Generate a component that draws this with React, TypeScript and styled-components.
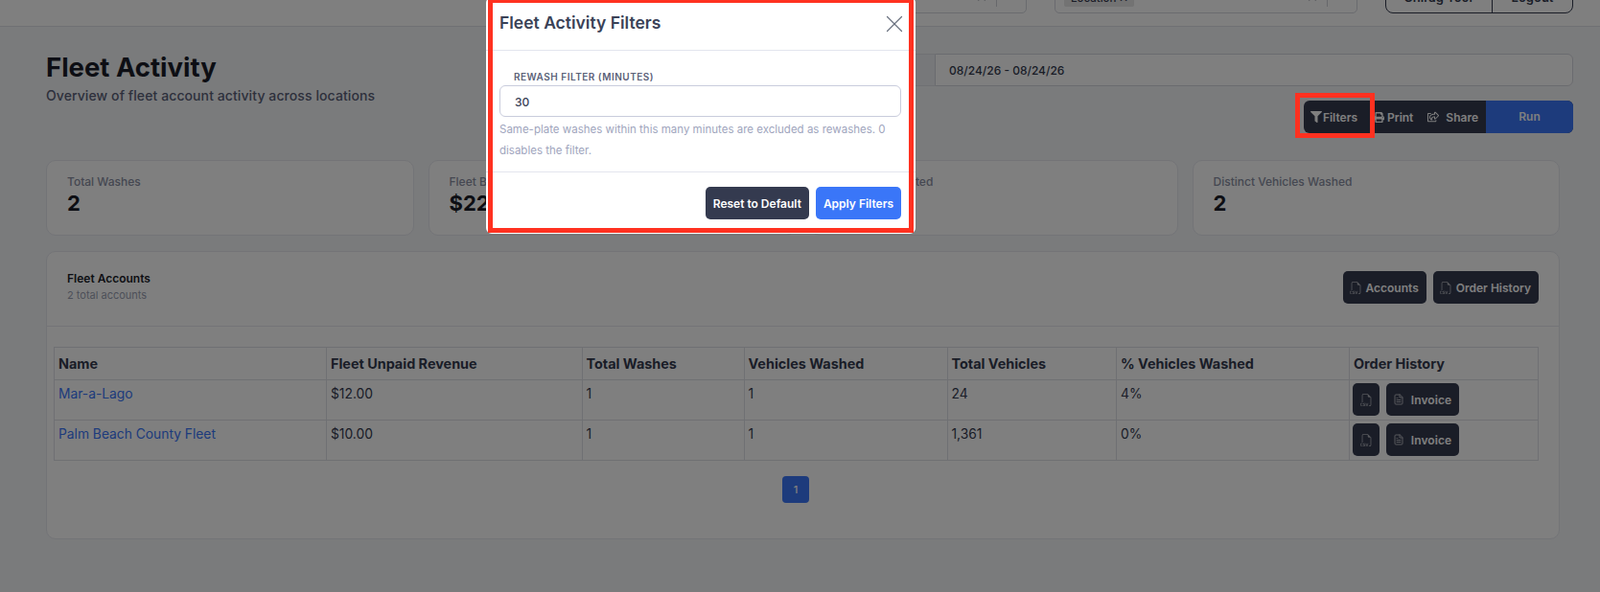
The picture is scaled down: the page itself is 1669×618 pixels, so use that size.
import React from "react"
import styled, { createGlobalStyle } from "styled-components"
import { FaFilter, FaPrint, FaRegShareSquare } from "react-icons/fa"
import { BsFiletypeCsv } from "react-icons/bs"
import { FiFileText } from "react-icons/fi"
import { X, ChevronDown } from "lucide-react"

const GlobalStyle = createGlobalStyle`
    html, body {
        margin: 0;
        padding: 0;
        height: 100%;
        overflow: hidden;
        background: #f5f6f9;
    }
    * { box-sizing: border-box; }
    body, input, button, table {
        font-family: Inter, "Noto Sans", sans-serif;
    }
`

const Page = styled.div`
    position: relative;
    width: 1669px;
    height: 618px;
    overflow: hidden;
    background: #f5f6f9;
    color: #343a4f;
`

const TopBar = styled.header`
    height: 28px;
    background: #fff;
    border-bottom: 1px solid #dfe1e6;
    padding: 0 28px 13px 0;
    display: flex;
    justify-content: flex-end;
    align-items: flex-end;
    overflow: hidden;
`

const SelectBox = styled.div`
    flex: none;
    width: 316px;
    height: 38px;
    margin-right: 29px;
    padding: 0 8px 6px 9px;
    border: 1px solid #d5d7de;
    border-radius: 5px;
    display: flex;
    align-items: flex-end;
    justify-content: space-between;
`

const Tag = styled.span`
    height: 22px;
    width: 73px;
    padding: 0 7px;
    background: #e6e6e6;
    border-radius: 2px;
    font-size: 11.5px;
    font-weight: 500;
    line-height: 26px;
    color: #343a4f;
    white-space: nowrap;
`

const SelectControls = styled.span`
    display: flex;
    align-items: center;
    gap: 8px;
    color: #c4c6cc;
    font-size: 12px;
`

const ControlDivider = styled.span`
    width: 1px;
    height: 20px;
    background: #cfd1d6;
`

const UserButtons = styled.div`
    display: flex;
    flex: none;
    height: 34px;
    border: 1px solid #343a4f;
    border-radius: 0 0 8px 8px;
`

const UserButton = styled.div<{ $width: number; $divided?: boolean }>`
    width: ${props => props.$width}px;
    text-align: center;
    font-size: 13px;
    font-weight: 600;
    line-height: 32px;
    color: #343a4f;
    border-left: ${props => props.$divided ? "1px solid #343a4f" : "none"};
`

const Content = styled.main`
    padding: 0 42px 0 48px;
`

const TopRow = styled.section`
    display: grid;
    grid-template-columns: 796px 1fr;
    margin-right: -14px;
    height: 139px;
`

const Heading = styled.div`
    padding-top: 25px;
`

const Title = styled.h1`
    margin: 0;
    font-size: 27.5px;
    line-height: 34px;
    font-weight: 700;
    color: #1a1d29;
`

const Subtitle = styled.p`
    margin: 3px 0 0;
    font-size: 14px;
    line-height: 20px;
    font-weight: 500;
    letter-spacing: 0.09px;
    color: #5b6178;
`

const Controls = styled.div`
    padding-top: 28px;
    display: flex;
    flex-direction: column;
    align-items: flex-end;
`

const DateGroup = styled.div`
    width: 100%;
    height: 34px;
    display: flex;
`

const DatePrefix = styled.div`
    width: 131px;
    background: #eef0f4;
    border: 1px solid #dfe1e6;
    border-right: none;
    border-radius: 6px 0 0 6px;
`

const DateField = styled.div`
    flex: 1;
    background: #fff;
    border: 1px solid #d5d7de;
    border-radius: 0 6px 6px 0;
    padding: 2px 0 0 14px;
    font-size: 12px;
    font-weight: 500;
    line-height: 30px;
    color: #343a4f;
`

const ActionRow = styled.div`
    display: flex;
    margin-top: 15px;
    height: 34px;
    border-radius: 6px;
    background: #343a4f;
`

const ActionButton = styled.div<{ $left: number; $right: number; $gap: number }>`
    position: relative;
    display: flex;
    align-items: center;
    gap: ${props => props.$gap}px;
    padding: 0 ${props => props.$right}px 0 ${props => props.$left}px;
    font-size: 12px;
    font-weight: 600;
    color: #fff;
    svg { flex: none; }
`

const RunButton = styled.div`
    width: 91px;
    background: #3a76f8;
    border-radius: 0 6px 6px 0;
    text-align: center;
    font-size: 12px;
    font-weight: 600;
    line-height: 34px;
    color: #fff;
`

const Highlight = styled.div`
    position: absolute;
    left: -9px;
    top: -8px;
    width: 83px;
    height: 47px;
    border: 5px solid #ff3120;
    z-index: 30;
`

const Stats = styled.section`
    display: grid;
    grid-template-columns: repeat(4, 1fr);
    gap: 15px;
`

const StatCard = styled.div`
    height: 79px;
    background: #fff;
    border: 1px solid #e6e8ee;
    border-radius: 10px;
    padding: 14px 21px;
`

const StatLabel = styled.div`
    font-size: 12px;
    line-height: 16px;
    font-weight: 500;
    color: #8a8fa3;
`

const StatValue = styled.div`
    font-size: 22px;
    line-height: 28px;
    font-weight: 700;
    color: #1a1d29;
`

const AccountsCard = styled.section`
    margin-top: 16px;
    height: 301px;
    background: #fff;
    border: 1px solid #e6e8ee;
    border-radius: 10px;
`

const CardHeader = styled.div`
    height: 78px;
    border-bottom: 1px solid #e6e8ee;
    padding: 20px 21px 0 21px;
    display: flex;
    justify-content: space-between;
`

const CardTitle = styled.div`
    font-size: 12px;
    line-height: 16px;
    font-weight: 600;
    color: #1a1d29;
`

const CardSub = styled.div`
    margin-top: 2px;
    font-size: 11px;
    line-height: 15px;
    color: #9a9fb2;
`

const ButtonRow = styled.div`
    display: flex;
    gap: 7px;
    height: 34px;
`

const DarkButton = styled.div<{ $square?: boolean }>`
    height: 34px;
    padding: 0 ${props => props.$square ? "0" : "8px 0 7px"};
    width: ${props => props.$square ? "28px" : "auto"};
    display: flex;
    align-items: center;
    justify-content: center;
    gap: 4px;
    background: #343a4f;
    border-radius: 5px;
    color: #fff;
    font-size: 12px;
    font-weight: 600;
    white-space: nowrap;
    svg { flex: none; opacity: 0.6; }
`

const InvoiceButton = styled(DarkButton)`
    width: 76px;
    padding: 0 8px 0 7px;
    gap: 7px;
    letter-spacing: 0.1px;
`

const TableWrap = styled.div`
    padding: 21px 22px 0 7px;
`

const Table = styled.table`
    width: 1547px;
    table-layout: fixed;
    border-collapse: collapse;
    font-size: 13.8px;
    line-height: 21px;
    color: #343a4f;
`

const HeaderCell = styled.th`
    height: 34px;
    padding: 0 4px 1px;
    border: 1px solid #dfe1e6;
    text-align: left;
    font-size: 14.4px;
    font-weight: 700;
    color: #343a4f;
`

const Cell = styled.td`
    height: 42px;
    padding: 4px 4px 3px;
    border: 1px solid #dfe1e6;
    vertical-align: top;
`

const ActionCell = styled(Cell)`
    padding: 3px 3px 4px;
`

const AccountLink = styled.a`
    color: #3a76f8;
    text-decoration: none;
`

const Pager = styled.div`
    display: flex;
    justify-content: center;
    margin-top: 16px;
`

const PageNumber = styled.div`
    width: 28px;
    height: 28px;
    background: #3a76f8;
    border-radius: 4px;
    color: #fff;
    text-align: center;
    font-size: 11px;
    font-weight: 500;
    line-height: 28px;
`

const Overlay = styled.div`
    position: absolute;
    inset: 0;
    background: rgba(0, 0, 0, 0.5);
    z-index: 10;
`

const Modal = styled.div`
    position: absolute;
    left: 507px;
    top: -3px;
    width: 448px;
    background: #fff;
    border-radius: 6px;
    z-index: 20;
`

const ModalFrame = styled.div`
    position: absolute;
    left: 2px;
    right: 2px;
    top: 1px;
    bottom: 1px;
    border: 5px solid #ff3120;
    z-index: 30;
    pointer-events: none;
`

const ModalHeader = styled.div`
    height: 56px;
    border-bottom: 1px solid #e3e5ee;
    padding: 0 7px 0 14px;
    display: flex;
    align-items: center;
    justify-content: space-between;
    color: #6b7280;
`

const ModalTitle = styled.h2`
    margin: 0 0 2px;
    font-size: 17.5px;
    font-weight: 600;
    color: #3a4257;
`

const ModalBody = styled.div`
    height: 127px;
    border-bottom: 1px solid #e3e5ee;
    padding: 20px 15px 0 14px;
`

const FieldLabel = styled.label`
    display: block;
    padding-left: 15px;
    font-size: 10px;
    line-height: 15px;
    font-weight: 600;
    letter-spacing: 0.5px;
    text-transform: uppercase;
    color: #5b6178;
`

const NumberInput = styled.input`
    display: block;
    width: 100%;
    height: 33px;
    margin-top: 1px;
    padding: 2px 15px 0;
    border: 1px solid #c9ccdc;
    border-radius: 6px;
    outline: none;
    font-size: 12px;
    font-weight: 500;
    color: #3a4257;
`

const HelpText = styled.p`
    margin: 0;
    padding-top: 2px;
    font-size: 11.5px;
    line-height: 22px;
    color: #a0a5bd;
`

const ModalFooter = styled.div`
    height: 64px;
    padding: 15px 15px 0;
    display: flex;
    justify-content: flex-end;
    gap: 7px;
`

const FooterButton = styled.button<{ $primary?: boolean }>`
    height: 34px;
    padding: 0 8px;
    border: none;
    border-radius: 5px;
    background: ${props => props.$primary ? "#3a76f8" : "#343a4f"};
    color: #fff;
    font-size: 12px;
    font-weight: 600;
`

const columns = [284, 266.5, 169, 212, 176.5, 243, 196.5]

const headers = [
    "Name",
    "Fleet Unpaid Revenue",
    "Total Washes",
    "Vehicles Washed",
    "Total Vehicles",
    "% Vehicles Washed",
    "Order History",
]

const accounts = [
    { name: "Mar-a-Lago", revenue: "$12.00", washes: "1", washed: "1", total: "24", percent: "4%" },
    { name: "Palm Beach County Fleet", revenue: "$10.00", washes: "1", washed: "1", total: "1,361", percent: "0%" },
]

const stats = [
    { label: "Total Washes", value: "2" },
    { label: "Fleet Balance", value: "$22.00" },
    { label: "Vehicles Activated", value: "2" },
    { label: "Distinct Vehicles Washed", value: "2" },
]

function Select({ tag }: { tag?: boolean }) {
    return (
        <SelectBox>
            {tag ? <Tag>Location ✕</Tag> : <span />}
            <SelectControls>
                <X size={14} />
                <ControlDivider />
                <ChevronDown size={14} />
            </SelectControls>
        </SelectBox>
    )
}

export default function App() {
    return (
        <Page>
            <GlobalStyle />
            <TopBar>
                <Select />
                <Select tag />
                <UserButtons>
                    <UserButton $width={110}>Chirag Toor</UserButton>
                    <UserButton $width={84} $divided>Logout</UserButton>
                </UserButtons>
            </TopBar>

            <Content>
                <TopRow>
                    <Heading>
                        <Title>Fleet Activity</Title>
                        <Subtitle>Overview of fleet account activity across locations</Subtitle>
                    </Heading>
                    <Controls>
                        <DateGroup>
                            <DatePrefix />
                            <DateField>08/24/26 - 08/24/26</DateField>
                        </DateGroup>
                        <ActionRow>
                            <ActionButton $left={7} $right={8} $gap={1}>
                                <FaFilter size={12} />
                                Filters
                                <Highlight />
                            </ActionButton>
                            <ActionButton $left={9} $right={8} $gap={3}>
                                <FaPrint size={11} />
                                Print
                            </ActionButton>
                            <ActionButton $left={7} $right={8} $gap={7}>
                                <FaRegShareSquare size={12} />
                                Share
                            </ActionButton>
                            <RunButton>Run</RunButton>
                        </ActionRow>
                    </Controls>
                </TopRow>

                <Stats>
                    {stats.map(stat => (
                        <StatCard key={stat.label}>
                            <StatLabel>{stat.label}</StatLabel>
                            <StatValue>{stat.value}</StatValue>
                        </StatCard>
                    ))}
                </Stats>

                <AccountsCard>
                    <CardHeader>
                        <div>
                            <CardTitle>Fleet Accounts</CardTitle>
                            <CardSub>2 total accounts</CardSub>
                        </div>
                        <ButtonRow>
                            <DarkButton><BsFiletypeCsv size={13} />Accounts</DarkButton>
                            <DarkButton><BsFiletypeCsv size={13} />Order History</DarkButton>
                        </ButtonRow>
                    </CardHeader>
                    <TableWrap>
                        <Table>
                            <colgroup>
                                {columns.map((width, i) => <col key={i} width={width} />)}
                            </colgroup>
                            <thead>
                                <tr>
                                    {headers.map(header => <HeaderCell key={header}>{header}</HeaderCell>)}
                                </tr>
                            </thead>
                            <tbody>
                                {accounts.map(account => (
                                    <tr key={account.name}>
                                        <Cell><AccountLink href="#">{account.name}</AccountLink></Cell>
                                        <Cell>{account.revenue}</Cell>
                                        <Cell>{account.washes}</Cell>
                                        <Cell>{account.washed}</Cell>
                                        <Cell>{account.total}</Cell>
                                        <Cell>{account.percent}</Cell>
                                        <ActionCell>
                                            <ButtonRow>
                                                <DarkButton $square><BsFiletypeCsv size={13} /></DarkButton>
                                                <InvoiceButton><FiFileText size={12} />Invoice</InvoiceButton>
                                            </ButtonRow>
                                        </ActionCell>
                                    </tr>
                                ))}
                            </tbody>
                        </Table>
                        <Pager>
                            <PageNumber>1</PageNumber>
                        </Pager>
                    </TableWrap>
                </AccountsCard>
            </Content>

            <Overlay />

            <Modal>
                <ModalHeader>
                    <ModalTitle>Fleet Activity Filters</ModalTitle>
                    <X size={30} strokeWidth={1} />
                </ModalHeader>
                <ModalBody>
                    <FieldLabel>Rewash Filter (Minutes)</FieldLabel>
                    <NumberInput defaultValue="30" />
                    <HelpText>Same-plate washes within this many minutes are excluded as rewashes. 0 disables the filter.</HelpText>
                </ModalBody>
                <ModalFooter>
                    <FooterButton>Reset to Default</FooterButton>
                    <FooterButton $primary>Apply Filters</FooterButton>
                </ModalFooter>
                <ModalFrame />
            </Modal>
        </Page>
    )
}
